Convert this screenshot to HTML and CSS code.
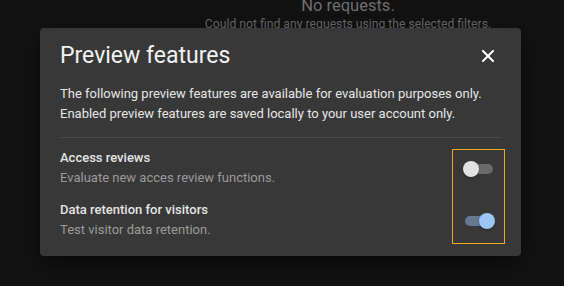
FILE: index.html
```html
<!DOCTYPE html>
<html lang="en">
<head>
    <meta charset="UTF-8">
    <meta name="viewport" content="width=device-width, initial-scale=1.0">
    <title>Preview features</title>
    <link rel="stylesheet" href="styles.css">
</head>
<body>
    <div class="page">
        <div class="empty-state">
            <div class="empty-title">No requests.</div>
            <div class="empty-text">Could not find any requests using the selected filters.</div>
        </div>
    </div>

    <div class="dialog">
        <div class="dialog-header">
            <h2>Preview features</h2>
            <button class="close-btn" aria-label="Close">
                <svg width="12" height="12" viewBox="0 0 12 12">
                    <path d="M1 1 L11 11 M11 1 L1 11" stroke="#fff" stroke-width="2" stroke-linecap="square"/>
                </svg>
            </button>
        </div>

        <p class="dialog-intro">
            The following preview features are available for evaluation purposes only.<br>
            Enabled preview features are saved locally to your user account only.
        </p>

        <div class="divider"></div>

        <div class="features">
            <div class="feature-list">
                <div class="feature">
                    <div class="feature-name">Access reviews</div>
                    <div class="feature-desc">Evaluate new acces review functions.</div>
                </div>
                <div class="feature">
                    <div class="feature-name">Data retention for visitors</div>
                    <div class="feature-desc">Test visitor data retention.</div>
                </div>
            </div>

            <div class="feature-switches">
                <div class="switch-row">
                    <div class="switch"><span class="track"></span><span class="thumb"></span></div>
                </div>
                <div class="switch-row">
                    <div class="switch on"><span class="track"></span><span class="thumb"></span></div>
                </div>
            </div>
        </div>
    </div>
</body>
</html>
```

FILE: styles.css
```css
* {
    margin: 0;
    padding: 0;
    box-sizing: border-box;
}

body {
    font-family: Roboto, 'Liberation Sans', sans-serif;
    background: #121212;
    min-height: 100vh;
    overflow: hidden;
}

.page {
    padding-left: 132px;
    margin-top: -3px;
}

.empty-state {
    text-align: center;
}

.empty-title {
    font-size: 16.5px;
    line-height: 18px;
    color: #6e6e6e;
}

.empty-text {
    font-size: 12.2px;
    line-height: 16px;
    margin-top: 1px;
    color: #686868;
}

/* modal */
.dialog {
    position: absolute;
    left: 40px;
    top: 28px;
    width: 481px;
    background: #383838;
    border-radius: 4px;
    padding: 12px 20px 12px;
    box-shadow: 0 8px 20px rgba(0,0,0,0.5);
}

.dialog-header {
    display: flex;
    align-items: center;
    justify-content: space-between;
    height: 32px;
}

.dialog-header h2 {
    font-size: 23px;
    line-height: 32px;
    font-weight: 400;
    color: #f2f2f2;
}

.close-btn {
    width: 26px;
    height: 26px;
    display: flex;
    align-items: center;
    justify-content: center;
    background: none;
    border: none;
    cursor: pointer;
}

.dialog-intro {
    margin-top: 12px;
    font-size: 13px;
    line-height: 20px;
    color: #e6e6e6;
}

.divider {
    margin-top: 13px;
    height: 1px;
    background: #4a4a4a;
}

.features {
    display: flex;
    align-items: flex-start;
    justify-content: space-between;
    margin-top: 10px;
}

.feature-list {
    display: flex;
    flex-direction: column;
    gap: 12px;
}

.feature {
    font-size: 13px;
    line-height: 20px;
}

.feature-name {
    color: #e4e4e4;
    font-weight: 500;
}

.feature-desc {
    color: #9a9a9a;
}

.feature-switches {
    width: 53px;
    margin-top: 1px;
    margin-right: -4px;
    padding-bottom: 3px;
    border: 1px solid #f0a820;
    display: flex;
    flex-direction: column;
    gap: 14px;
}

.switch-row {
    height: 38px;
    display: flex;
    align-items: center;
    justify-content: center;
}

.switch {
    position: relative;
    width: 32px;
    height: 16px;
}

.switch .track {
    position: absolute;
    left: 2px;
    right: 2px;
    top: 3px;
    height: 10px;
    border-radius: 5px;
    background: #6a6a6a;
}

.switch .thumb {
    position: absolute;
    left: 0;
    top: 0;
    width: 16px;
    height: 16px;
    border-radius: 50%;
    background: #e2e2e2;
    box-shadow: 0 1px 2px rgba(0,0,0,0.3);
}

.switch.on .track {
    background: #66788f;
}

.switch.on .thumb {
    left: 16px;
    background: #9cc6f6;
}
```
